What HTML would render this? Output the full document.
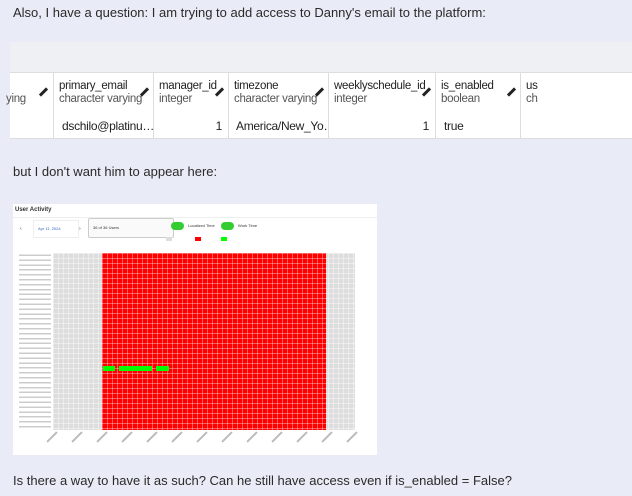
<!DOCTYPE html><html><head><style>
body{margin:0;width:632px;height:496px;background:#e9ecf6;font-family:"Liberation Sans",sans-serif;color:#333;position:relative;overflow:hidden}
.t{position:absolute;left:13px;font-size:13px;color:#2a2a2a}
.tbl{position:absolute;left:10px;top:42px;width:622px;height:96px;background:#eff0f4}
.hd{position:absolute;top:30px;height:40px;left:0;right:0;background:#fff;border-top:1px solid #ddd;border-bottom:1px solid #ddd}
.rw{position:absolute;top:71px;height:25px;left:0;right:0;background:#fff;border-bottom:1px solid #ddd}
.c{position:absolute;top:0;bottom:0;border-left:1px solid #ddd;font-size:11.5px;letter-spacing:-0.3px;color:#222;overflow:hidden}
.c b{font-weight:normal;position:absolute;left:5px;top:6px;line-height:14px;white-space:nowrap}
.c i{font-style:normal;color:#555;position:absolute;left:5px;top:20px;white-space:nowrap}
.pen{position:absolute;right:7px;top:14px;width:3px;height:10px;background:#222;transform:rotate(45deg)}
.d{position:absolute;top:6px;font-size:12px;white-space:nowrap}
.pan{position:absolute;left:13px;top:204px;width:364px;height:251px;background:#fff}
.xl{position:absolute;top:232px;width:14px;height:2px;background:#bbb;transform:rotate(-45deg)}
</style></head><body>
<div class="t" style="top:5px">Also, I have a question: I am trying to add access to Danny's email to the platform:</div>
<div class="tbl">
<div class="hd">
<div class="c" style="left:-30px;width:72px;border:0"><i style="left:26px">ying</i><span class="pen"></span></div>
<div class="c" style="left:43px;width:99px"><b>primary_email</b><i>character varying</i><span class="pen"></span></div>
<div class="c" style="left:143px;width:74px"><b>manager_id</b><i>integer</i><span class="pen"></span></div>
<div class="c" style="left:218px;width:99px"><b>timezone</b><i>character varying</i><span class="pen"></span></div>
<div class="c" style="left:318px;width:106px"><b>weeklyschedule_id</b><i>integer</i><span class="pen"></span></div>
<div class="c" style="left:425px;width:84px"><b>is_enabled</b><i>boolean</i><span class="pen"></span></div>
<div class="c" style="left:510px;width:40px"><b>us</b><i>ch</i></div>
</div>
<div class="rw">
<div class="c" style="left:43px;width:99px"><span class="d" style="left:8px">dschilo@platinu…</span></div>
<div class="c" style="left:143px;width:74px"><span class="d" style="right:6px">1</span></div>
<div class="c" style="left:218px;width:99px"><span class="d" style="left:7px">America/New_Yo…</span></div>
<div class="c" style="left:318px;width:106px"><span class="d" style="right:6px">1</span></div>
<div class="c" style="left:425px;width:84px"><span class="d" style="left:8px">true</span></div>
<div class="c" style="left:510px;width:40px"></div>
</div>
</div>
<div class="t" style="top:164px">but I don't want him to appear here:</div>
<div class="pan">
<div style="position:absolute;left:2px;top:3px;font-size:6px;font-weight:bold">User Activity</div>
<div style="position:absolute;left:0;right:0;top:13px;height:1px;background:#eee"></div>
<div style="position:absolute;left:7px;top:22px;font-size:5px">‹</div>
<div style="position:absolute;left:20px;top:16px;width:40px;height:16px;border:1px solid #eee;font-size:4px;color:#36c;line-height:16px;padding-left:4px">Apr 11, 2024</div>
<div style="position:absolute;left:66px;top:22px;font-size:5px">›</div>
<div style="position:absolute;left:75px;top:14px;width:80px;height:18px;border:1px solid #ccc;border-radius:2px;font-size:4px;line-height:18px;padding-left:4px;background:#fafafa">36 of 36 Users</div>
<div style="position:absolute;left:158px;top:18px;width:13px;height:8px;border-radius:4px;background:#3c3"></div>
<div style="position:absolute;left:175px;top:19px;font-size:4px">Localized Time</div>
<div style="position:absolute;left:208px;top:18px;width:13px;height:8px;border-radius:4px;background:#3c3"></div>
<div style="position:absolute;left:225px;top:19px;font-size:4px">Work Time</div>
<div style="position:absolute;left:153px;top:33px;width:6px;height:4px;background:#ddd"></div>
<div style="position:absolute;left:182px;top:33px;width:6px;height:4px;background:#f00"></div>
<div style="position:absolute;left:208px;top:33px;width:6px;height:4px;background:#0f0"></div>
<div style="position:absolute;left:40px;top:49px;width:302px;height:177px;background:#ddd;background-image:linear-gradient(90deg,rgba(255,255,255,.4) 1px,transparent 1px),linear-gradient(rgba(255,255,255,.4) 1px,transparent 1px);background-size:5px 5px"></div>
<div style="position:absolute;left:89px;top:49px;width:224px;height:177px;background:#f00;background-image:linear-gradient(90deg,rgba(255,255,255,.35) 1px,transparent 1px),linear-gradient(rgba(255,255,255,.35) 1px,transparent 1px);background-size:5px 5px"></div>
<div style="position:absolute;left:90px;top:162px;width:12px;height:5px;background:#0f0"></div>
<div style="position:absolute;left:106px;top:162px;width:33px;height:5px;background:#0f0"></div>
<div style="position:absolute;left:143px;top:162px;width:13px;height:5px;background:#0f0"></div>
<div style="position:absolute;left:6px;top:49px;width:32px;height:177px;background:repeating-linear-gradient(#fff 0,#fff 1.5px,#ccc 1.5px,#ccc 3px,#fff 3px,#fff 4.9px)"></div>
<div class="xl" style="left:32px"></div><div class="xl" style="left:57px"></div><div class="xl" style="left:82px"></div><div class="xl" style="left:107px"></div><div class="xl" style="left:132px"></div><div class="xl" style="left:157px"></div><div class="xl" style="left:182px"></div><div class="xl" style="left:207px"></div><div class="xl" style="left:232px"></div><div class="xl" style="left:257px"></div><div class="xl" style="left:282px"></div><div class="xl" style="left:307px"></div><div class="xl" style="left:332px"></div>
</div>
<div class="t" style="top:473px">Is there a way to have it as such? Can he still have access even if is_enabled = False?</div>
</body></html>
